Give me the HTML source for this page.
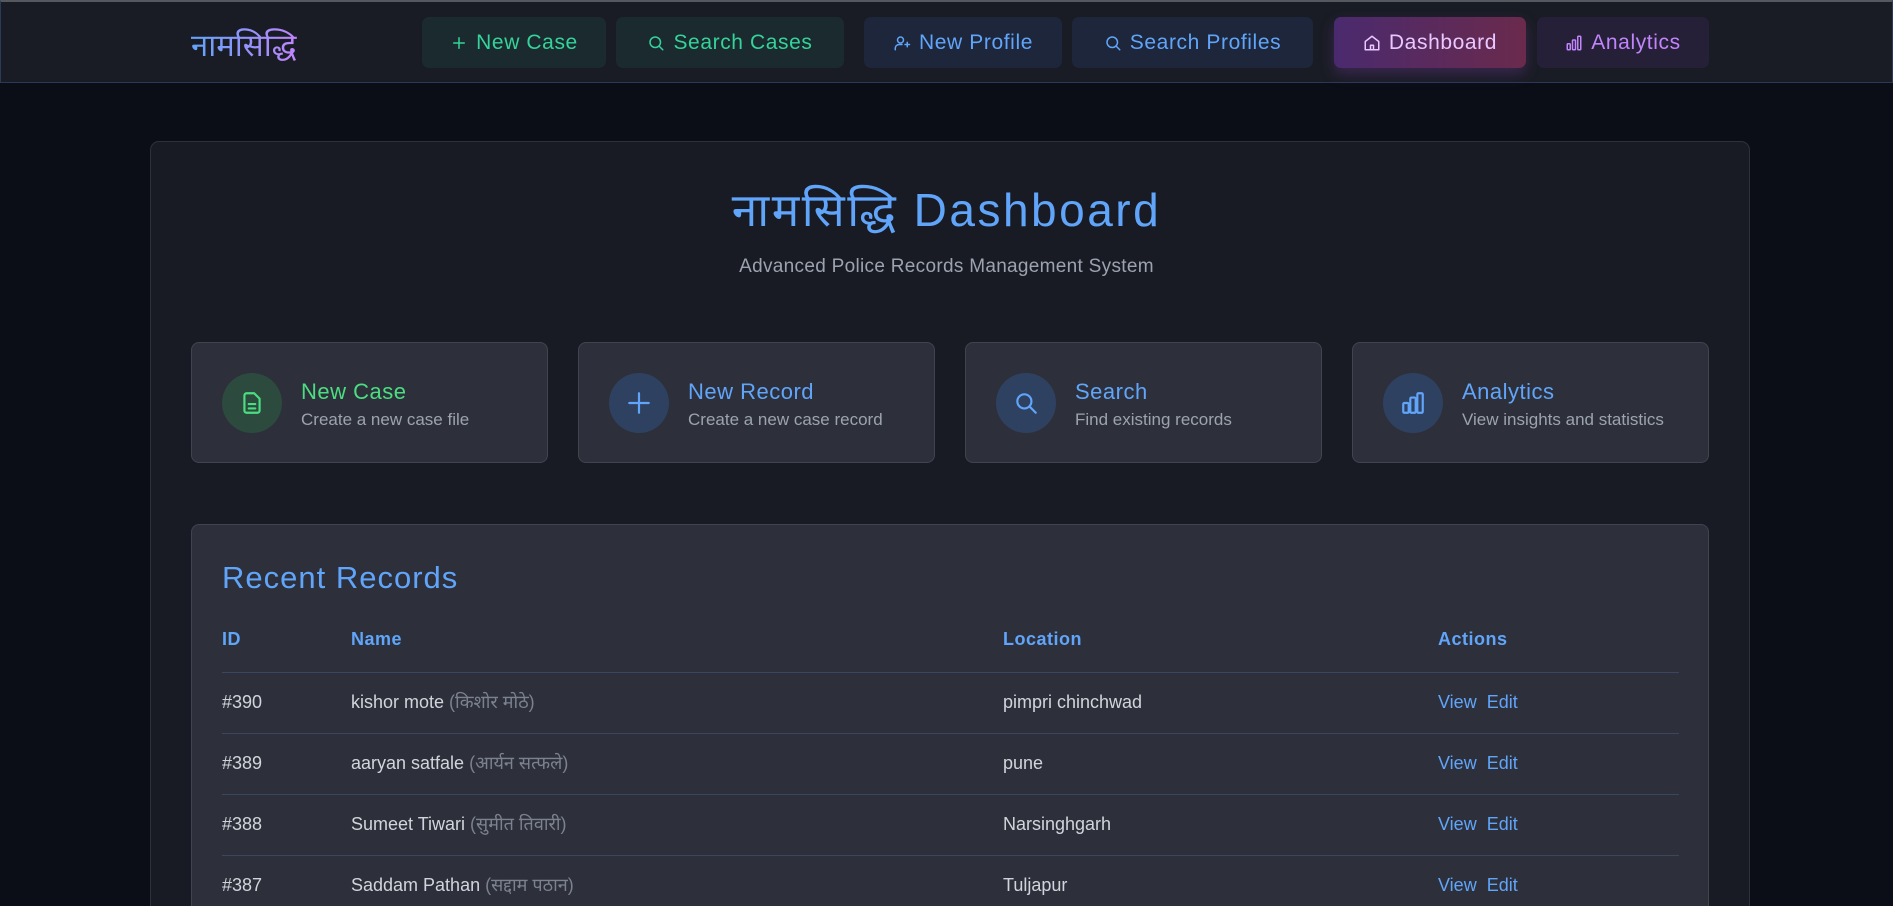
<!DOCTYPE html>
<html><head><meta charset="utf-8"><style>
*{margin:0;padding:0;box-sizing:border-box}
html{width:1893px;height:906px;overflow:hidden}
body{width:1893px;height:906px;overflow:hidden;background:#0b0e17;font-family:"Liberation Sans","Noto Sans CJK SC",sans-serif;position:relative}
.nav{position:absolute;left:0;top:0;width:1893px;height:83px;background:#191c24;border-top:2px solid #55585e;border-bottom:1px solid #2a3a58;border-left:1px solid #2a3a58;border-right:1px solid #2a3a58}
.logo{position:absolute;left:190px;top:22px;font-size:31px;background:linear-gradient(90deg,#60a5fa,#c084fc);-webkit-background-clip:text;color:transparent}
.btn{position:absolute;top:17px;height:51px;border-radius:7px;font-size:21px;display:flex;align-items:center;justify-content:center;gap:8px;letter-spacing:0.6px}
.btn svg{width:18px;height:18px;fill:none;stroke:currentColor;stroke-width:2;stroke-linecap:round;stroke-linejoin:round}
.g{background:#1a2a2f;color:#34d399}
.b{background:#1d263a;color:#60a5fa}
.p{background:#261f38;color:#c084fc}
.d{background:linear-gradient(90deg,#4a2a6e,#6a2a4c);color:#e9c8ff;box-shadow:0 6px 14px rgba(120,60,160,.35)}
.main{position:absolute;left:150px;top:141px;width:1600px;height:780px;background:#181b24;border:1px solid #2d313b;border-radius:9px}
.title{position:absolute;left:0;width:1893px;top:178px;text-align:center;font-size:46px;color:#60a5fa;letter-spacing:2.5px}
.sub{position:absolute;left:0;width:1893px;top:256px;text-align:center;font-size:19px;color:#9ca3af;letter-spacing:0.3px}
.card{position:absolute;top:342px;width:357px;height:121px;background:#2d303a;border:1px solid #40444e;border-radius:8px}
.ic{position:absolute;left:30px;top:30px;width:60px;height:60px;border-radius:50%;display:flex;align-items:center;justify-content:center}
.ic svg{width:26px;height:26px;fill:none;stroke:currentColor;stroke-width:2;stroke-linecap:round;stroke-linejoin:round}
.ct{position:absolute;left:109px;top:36px;font-size:22px;letter-spacing:0.5px}
.cd{position:absolute;left:109px;top:67px;font-size:17px;color:#9ca3af}
.rec{position:absolute;left:191px;top:524px;width:1518px;height:420px;background:#2d303a;border:1px solid #40444e;border-radius:8px}
.rt{position:absolute;left:30px;top:35px;font-size:31px;color:#60a5fa;letter-spacing:1px}
.th{position:absolute;top:104px;font-size:18px;font-weight:bold;color:#60a5fa;letter-spacing:0.5px}
.hl{position:absolute;left:30px;width:1457px;height:1px;background:#3b4660}
.td{position:absolute;font-size:18px;color:#d1d5db;line-height:22px}
.dv{color:#7b8190}
.lk{color:#60a5fa}
</style></head><body>
<div class="nav">
<div class="logo">नामसिद्धि</div>
</div>
<div class="btn g" style="left:422px;width:184px"><svg viewBox="0 0 24 24"><path d="M12 5v14M5 12h14"/></svg>New Case</div>
<div class="btn g" style="left:616px;width:228px"><svg viewBox="0 0 24 24"><circle cx="11" cy="11" r="7"/><path d="M16 16l5 5"/></svg>Search Cases</div>
<div class="btn b" style="left:864px;width:198px"><svg viewBox="0 0 24 24"><circle cx="10" cy="8" r="4"/><path d="M3 21v-2a5 5 0 0 1 5-5h4M19 11v6M16 14h6"/></svg>New Profile</div>
<div class="btn b" style="left:1072px;width:241px"><svg viewBox="0 0 24 24"><circle cx="11" cy="11" r="7"/><path d="M16 16l5 5"/></svg>Search Profiles</div>
<div class="btn d" style="left:1334px;width:192px"><svg viewBox="0 0 24 24"><path d="M3 10l9-7 9 7v11H3z"/><path d="M10 21v-6h4v6"/></svg>Dashboard</div>
<div class="btn p" style="left:1537px;width:172px"><svg viewBox="0 0 24 24"><rect x="3" y="13" width="4" height="8" rx="1"/><rect x="10" y="8" width="4" height="13" rx="1"/><rect x="17" y="3" width="4" height="18" rx="1"/></svg>Analytics</div>

<div class="main"></div>
<div class="title">नामसिद्धि Dashboard</div>
<div class="sub">Advanced Police Records Management System</div>

<div class="card" style="left:191px"><div class="ic" style="background:#2c4a3d;color:#4ade80"><svg viewBox="0 0 24 24"><path d="M14 3H7a2 2 0 0 0-2 2v14a2 2 0 0 0 2 2h10a2 2 0 0 0 2-2V8z"/><path d="M9 13h6M9 17h6"/></svg></div><div class="ct" style="color:#4ade80">New Case</div><div class="cd">Create a new case file</div></div>
<div class="card" style="left:578px"><div class="ic" style="background:#2f4161;color:#60a5fa"><svg viewBox="0 0 24 24"><path d="M12 3v18M3 12h18"/></svg></div><div class="ct" style="color:#60a5fa">New Record</div><div class="cd">Create a new case record</div></div>
<div class="card" style="left:965px"><div class="ic" style="background:#2f4161;color:#60a5fa"><svg viewBox="0 0 24 24"><circle cx="10.5" cy="10.5" r="6.5"/><path d="M15.5 15.5L21 21"/></svg></div><div class="ct" style="color:#60a5fa">Search</div><div class="cd">Find existing records</div></div>
<div class="card" style="left:1352px"><div class="ic" style="background:#2f4161;color:#60a5fa"><svg viewBox="0 0 24 24"><rect x="3" y="12" width="5" height="9" rx="1"/><rect x="9.5" y="7" width="5" height="14" rx="1"/><rect x="16" y="3" width="5" height="18" rx="1"/></svg></div><div class="ct" style="color:#60a5fa">Analytics</div><div class="cd">View insights and statistics</div></div>

<div class="rec">
<div class="rt">Recent Records</div>
<div class="th" style="left:30px">ID</div>
<div class="th" style="left:159px">Name</div>
<div class="th" style="left:811px">Location</div>
<div class="th" style="left:1246px">Actions</div>
<div class="hl" style="top:147px"></div>
<div class="td" style="left:30px;top:166px">#390</div><div class="td" style="left:159px;top:166px">kishor mote <span class="dv">(किशोर मोठे)</span></div><div class="td" style="left:811px;top:166px">pimpri chinchwad</div><div class="td lk" style="left:1246px;top:166px">View&nbsp; Edit</div>
<div class="hl" style="top:208px"></div>
<div class="td" style="left:30px;top:227px">#389</div><div class="td" style="left:159px;top:227px">aaryan satfale <span class="dv">(आर्यन सत्फले)</span></div><div class="td" style="left:811px;top:227px">pune</div><div class="td lk" style="left:1246px;top:227px">View&nbsp; Edit</div>
<div class="hl" style="top:269px"></div>
<div class="td" style="left:30px;top:288px">#388</div><div class="td" style="left:159px;top:288px">Sumeet Tiwari <span class="dv">(सुमीत तिवारी)</span></div><div class="td" style="left:811px;top:288px">Narsinghgarh</div><div class="td lk" style="left:1246px;top:288px">View&nbsp; Edit</div>
<div class="hl" style="top:330px"></div>
<div class="td" style="left:30px;top:349px">#387</div><div class="td" style="left:159px;top:349px">Saddam Pathan <span class="dv">(सद्दाम पठान)</span></div><div class="td" style="left:811px;top:349px">Tuljapur</div><div class="td lk" style="left:1246px;top:349px">View&nbsp; Edit</div>
</div>
</body></html>
